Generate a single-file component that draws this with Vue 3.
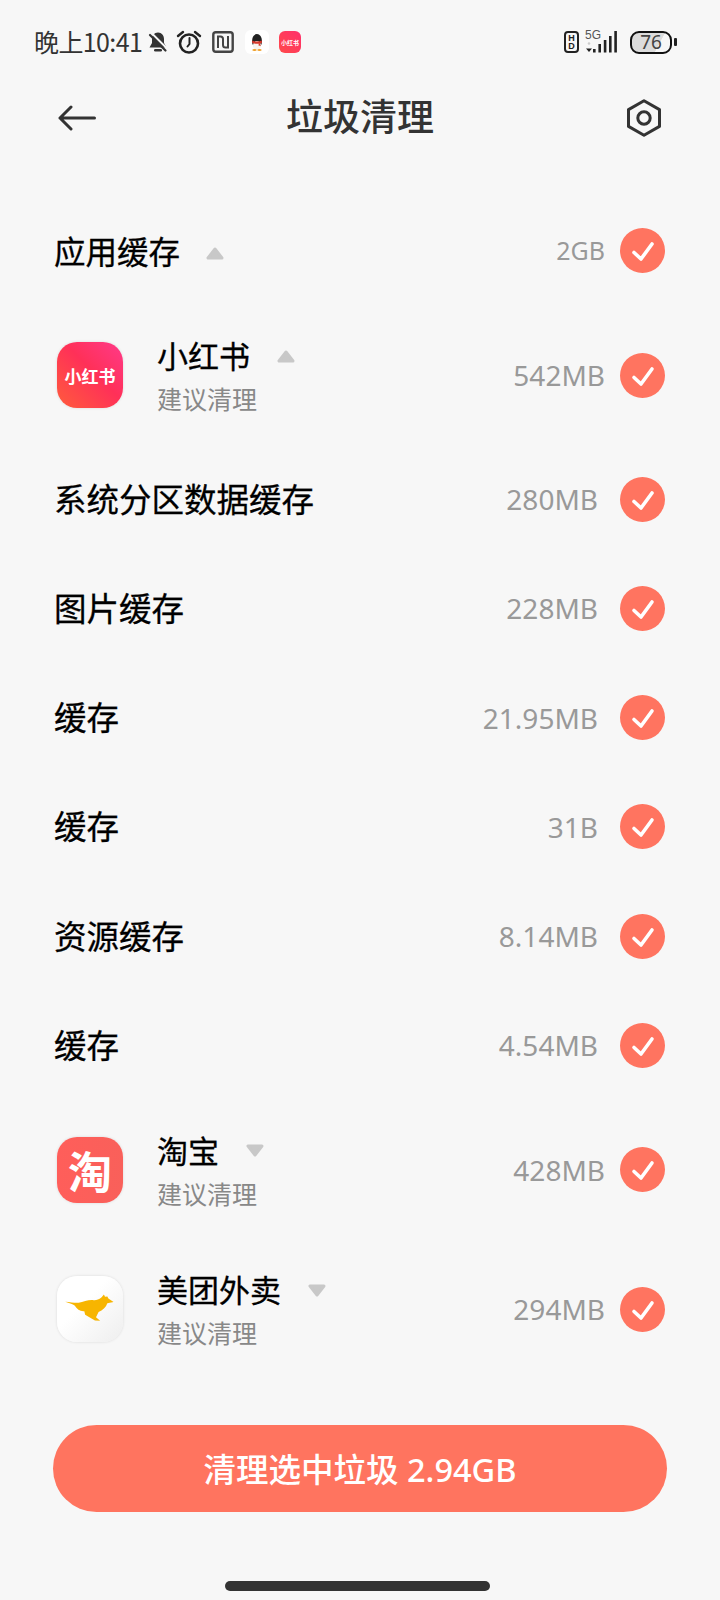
<script setup>
const rows = [
  { name: '应用缓存', size: '2GB', caret: 'up', wide: true },
  { name: '小红书', size: '542MB', caret: 'up', app: 'xhs' },
  { name: '系统分区数据缓存', size: '280MB' },
  { name: '图片缓存', size: '228MB' },
  { name: '缓存', size: '21.95MB' },
  { name: '缓存', size: '31B' },
  { name: '资源缓存', size: '8.14MB' },
  { name: '缓存', size: '4.54MB' },
  { name: '淘宝', size: '428MB', caret: 'down', app: 'taobao' },
  { name: '美团外卖', size: '294MB', caret: 'down', app: 'meituan' },
]
</script>

<template>
  <div class="page">
    <div class="status">
      <span class="time">晚上10:41</span>
      <svg class="st-bell" viewBox="0 0 22 22" width="22" height="22">
        <path d="M11 1.500c-3.800 0-6 3-6 6.500v4L2.500 16.500h17L17 12V8c0-3.500-2.200-6.500-6-6.500z" fill="#333" />
        <path d="M8.300 19.300h5.400" stroke="#333" stroke-width="2.600" stroke-linecap="round" />
        <path d="M5 2.500l15 15" stroke="#f7f7f7" stroke-width="2" />
        <path d="M3 4l15.500 15.500" stroke="#333" stroke-width="2.200" stroke-linecap="round" />
      </svg>
      <svg class="st-alarm" viewBox="0 0 26 24" width="26" height="24" fill="none" stroke="#222">
        <circle cx="13" cy="13.500" r="9" stroke-width="2.600" />
        <path d="M13.500 8v6l-2 2.500" stroke-width="2" stroke-linecap="round" />
        <path d="M2 6l5-4M24 6l-5-4" stroke-width="2.400" stroke-linecap="round" />
      </svg>
      <svg class="st-nfc" viewBox="0 0 22 22" width="22" height="22" fill="none" stroke="#444">
        <rect x="1.300" y="1.300" width="19.400" height="19.400" rx="2.500" stroke-width="2.400" />
        <path d="M6 17V5.500h2.500c1.500 0 2.500 1 2.500 2.500v6c0 1.500 1 2.500 2.500 2.500H16V5" stroke-width="2" />
      </svg>
      <span class="st-app st-qq">
        <svg viewBox="0 0 22 22" width="22" height="22">
          <ellipse cx="11" cy="10" rx="5" ry="7" fill="#222" />
          <ellipse cx="11" cy="14.500" rx="4" ry="4.500" fill="#f7f3ee" />
          <path d="M6.200 9.500c3 1.400 6.600 1.400 9.600 0v2.400c-3 1.200-6.600 1.200-9.600 0z" fill="#d8392b" />
          <path d="M13 11.500l2 3.500-2.500-.5z" fill="#d8392b" />
          <ellipse cx="8.500" cy="19" rx="2.200" ry="1" fill="#f0a22e" />
          <ellipse cx="13.500" cy="19" rx="2.200" ry="1" fill="#f0a22e" />
        </svg>
      </span>
      <span class="st-app st-xhs"><span>小红书</span></span>

      <span class="status-right">
        <span class="st-hd"><span>H</span><span>D</span></span>
        <span class="st-net">
          <span class="st-5g">5G</span>
          <svg viewBox="0 0 8 12" width="8" height="12">
            <circle cx="4" cy="2.500" r="1.300" fill="#ccc" />
            <path d="M1 7.500h6l-3 3.500z" fill="#222" />
          </svg>
        </span>
        <svg class="st-signal" viewBox="0 0 24 22" width="24" height="22" fill="#222">
          <rect x="0" y="18" width="2.600" height="3.500" />
          <rect x="5.400" y="13" width="2.600" height="8.500" />
          <rect x="10.800" y="9" width="2.600" height="12.500" />
          <rect x="16" y="5" width="2.600" height="16.500" />
          <rect x="21.300" y="0" width="2.600" height="21.500" />
        </svg>
        <span class="st-batt"><span class="st-batt-num">76</span></span>
        <span class="st-tip"></span>
      </span>
    </div>

    <div class="header">
      <svg viewBox="0 0 38 26" width="38" height="26" fill="none" stroke="#333" stroke-width="3" stroke-linecap="round" stroke-linejoin="round">
        <path d="M36.500 13H2M13 2L2 13l11 11" />
      </svg>
      <h1>垃圾清理</h1>
      <svg viewBox="0 0 36 38" width="36" height="38" fill="none" stroke="#333">
        <path d="M18 1.800l15.500 8.800v16.800L18 36.200 2.500 27.400V10.600z" stroke-width="3" stroke-linejoin="round" />
        <circle cx="18" cy="19" r="6.200" stroke-width="3" />
      </svg>
    </div>

    <div class="list">
      <div v-for="(row, i) in rows" :key="i" class="row" :class="{ 'row--app': row.app, 'row--first': row.wide, 'row--low': row.app === 'taobao' || row.app === 'meituan' }">
        <div v-if="row.app === 'xhs'" class="app-icon app-icon--xhs">小红书</div>
        <div v-else-if="row.app === 'taobao'" class="app-icon app-icon--taobao">淘</div>
        <div v-else-if="row.app === 'meituan'" class="app-icon app-icon--meituan">
          <svg viewBox="0 0 48 30" width="50" height="31">
            <path d="M0 7.500c5 .5 9 1.200 13 1 5-.8 9-3 14.500-2.500 2.500.2 5-.5 7.500-2.500l2.500-3 1 2.200 2.300-.4 1 2 5 3.500-6 1.200c-1.500 4-4.500 7-8.500 8.500l-2.500 5 4 3.500-5-.3-9.500-5.500-.8-3.500c-4 .5-7-2-9-5C8 9.500 4 9 0 7.500z" fill="#f7b500" />
          </svg>
        </div>
        <div class="text">
          <div class="title-line">
            <span class="name">{{ row.name }}</span>
            <svg v-if="row.caret" class="caret" :class="`caret--${row.caret}`" viewBox="0 0 18 13" width="18" height="13">
              <path d="M9 2L2 11h14z" fill="#c8c8c8" stroke="#c8c8c8" stroke-width="3" stroke-linejoin="round" />
            </svg>
          </div>
          <div v-if="row.app" class="sub">建议清理</div>
        </div>
        <span class="size" :class="{ 'size--inner': !row.app && !row.wide, 'size--small': row.wide }">{{ row.size }}</span>
        <svg class="check" viewBox="0 0 45 45" width="45" height="45">
          <circle cx="22.500" cy="22.500" r="22.500" fill="#ff7460" />
          <path d="M14 24.500l7 6.500L32 16" fill="none" stroke="#fff" stroke-width="3.600" stroke-linecap="round" stroke-linejoin="round" />
        </svg>
      </div>
    </div>

    <button class="clean">清理选中垃圾 2.94GB</button>
    <div class="home"></div>
  </div>
</template>

<style>
html,
body {
  margin: 0;
  background: #f7f7f7;
}
</style>

<style scoped>
.page {
  width: 720px;
  height: 1600px;
  overflow: hidden;
  background: #f7f7f7;
  font-family: "Noto Sans", "Noto Sans CJK SC", sans-serif;
  color: #000;
}
.status {
  height: 84px;
  display: flex;
  align-items: center;
  padding: 0 43px 0 34px;
  box-sizing: border-box;
}
.time {
  font-family: "Noto Sans CJK SC", sans-serif;
  font-size: 25px;
  line-height: 30px;
  margin-top: -2px;
  color: #333;
  width: 111px;
  white-space: nowrap;
  letter-spacing: -0.6px;
}
.st-bell {
  margin-left: 2px;
}
.st-alarm {
  margin-left: 7px;
}
.st-nfc {
  margin-left: 10px;
}
.st-app {
  width: 24px;
  height: 24px;
  border-radius: 6px;
  display: flex;
  align-items: center;
  justify-content: center;
  overflow: hidden;
}
.st-qq {
  margin-left: 11px;
  background: #fff;
}
.st-xhs {
  width: 22px;
  height: 22px;
  margin-left: 10px;
  background: linear-gradient(45deg, #ff4a4a, #ff2f6c);
  color: #fff;
}
.st-xhs span {
  font-family: "Noto Sans CJK SC", sans-serif;
  font-size: 10px;
  font-weight: 700;
  white-space: nowrap;
  transform: scale(0.6);
}
.status-right {
  margin-left: auto;
  display: flex;
  align-items: center;
}
.st-hd {
  width: 15px;
  height: 22px;
  border: 2.500px solid #222;
  border-radius: 4px;
  box-sizing: border-box;
  display: flex;
  flex-direction: column;
  align-items: center;
  justify-content: center;
  font-family: "Liberation Sans", sans-serif;
  font-size: 9px;
  line-height: 8px;
  font-weight: 700;
  color: #222;
}
.st-net {
  position: relative;
  width: 8px;
  height: 22px;
  margin-left: 6px;
  display: flex;
  align-items: flex-end;
}
.st-5g {
  position: absolute;
  left: 0;
  top: -3px;
  font-family: "Liberation Sans", sans-serif;
  font-size: 12px;
  color: #555;
}
.st-batt {
  width: 42px;
  height: 23px;
  margin-left: 13px;
  border: 2.500px solid #111;
  border-radius: 9px;
  box-sizing: border-box;
  background: linear-gradient(118deg, #dcdcdc 68%, #f7f7f7 69%);
  display: flex;
  align-items: center;
  justify-content: center;
}
.st-batt-num {
  font-family: "Noto Sans", sans-serif;
  font-size: 19px;
  color: #444;
  line-height: 1;
}
.st-tip {
  width: 3px;
  height: 8px;
  margin-left: 2px;
  background: #222;
  border-radius: 1px;
}
.header {
  height: 68px;
  margin: 0 58px;
  display: flex;
  align-items: center;
  justify-content: space-between;
  position: relative;
}
h1 {
  position: absolute;
  left: 0;
  right: 0;
  top: 5px;
  margin: 0;
  line-height: 52px;
  text-align: center;
  font-family: "Noto Sans CJK SC", sans-serif;
  font-size: 37px;
  font-weight: 500;
  color: #333;
  pointer-events: none;
}
.list {
  margin-top: 42.700px;
  padding: 0 55px 0 54px;
}
.row {
  height: 109.200px;
  display: flex;
  align-items: center;
}
.row--first {
  height: 111.600px;
}
.row--app {
  height: 138.400px;
}
.row--low {
  margin-top: 1px;
}
.app-icon {
  width: 66px;
  height: 66px;
  margin: 0 34px 0 3px;
  border-radius: 20px;
  flex: none;
  display: flex;
  align-items: center;
  justify-content: center;
  box-shadow: 0 0 3px rgba(0, 0, 0, 0.12);
  font-family: "Noto Sans CJK SC", sans-serif;
  color: #fff;
}
.app-icon--xhs {
  background: linear-gradient(45deg, #ff5c3c, #ff3058 55%, #ff3a8a);
  font-size: 17px;
  font-weight: 700;
}
.app-icon--taobao {
  background: linear-gradient(90deg, #ff5e5a, #f9605a);
  font-size: 44px;
  font-weight: 700;
}
.app-icon--meituan {
  background: linear-gradient(135deg, #fff 40%, #eee);
}
.text {
  flex: 1;
  min-width: 0;
}
.title-line {
  display: flex;
  align-items: center;
  margin-top: -3px;
}
.row--first .title-line,
.row--app .title-line {
  margin-top: -1px;
}
.name {
  font-family: "Noto Sans CJK SC", sans-serif;
  font-size: 32.500px;
  font-weight: 400;
  -webkit-text-stroke: 0.3px #000;
  line-height: 44px;
  color: #000;
}
.row--first .name {
  font-size: 31.500px;
}
.row--app .name {
  font-size: 31px;
}
.sub {
  font-family: "Noto Sans CJK SC", sans-serif;
  font-size: 25px;
  line-height: 36px;
  margin-top: 3px;
  color: #888;
}
.caret {
  margin-left: 27px;
  margin-top: 2px;
}
.row--first .caret {
  margin-left: 26px;
  margin-top: 7px;
}
.caret--down {
  transform: scaleY(-1);
}
.size {
  font-size: 28px;
  color: #999;
  margin-right: 15px;
  white-space: nowrap;
}
.size--inner {
  margin-right: 22px;
}
.size--small {
  font-size: 25px;
}
.check {
  flex: none;
}
.clean {
  display: block;
  width: 614px;
  height: 87px;
  margin: 46.300px 0 0 53px;
  padding: 0;
  border: none;
  border-radius: 44px;
  background: #ff745f;
  color: #fff;
  font-family: "Noto Sans", "Noto Sans CJK SC", sans-serif;
  font-size: 32.500px;
  font-weight: 500;
}
.home {
  width: 265px;
  height: 10px;
  margin: 69px 0 0 225px;
  background: #333;
  border-radius: 5px;
}
</style>
